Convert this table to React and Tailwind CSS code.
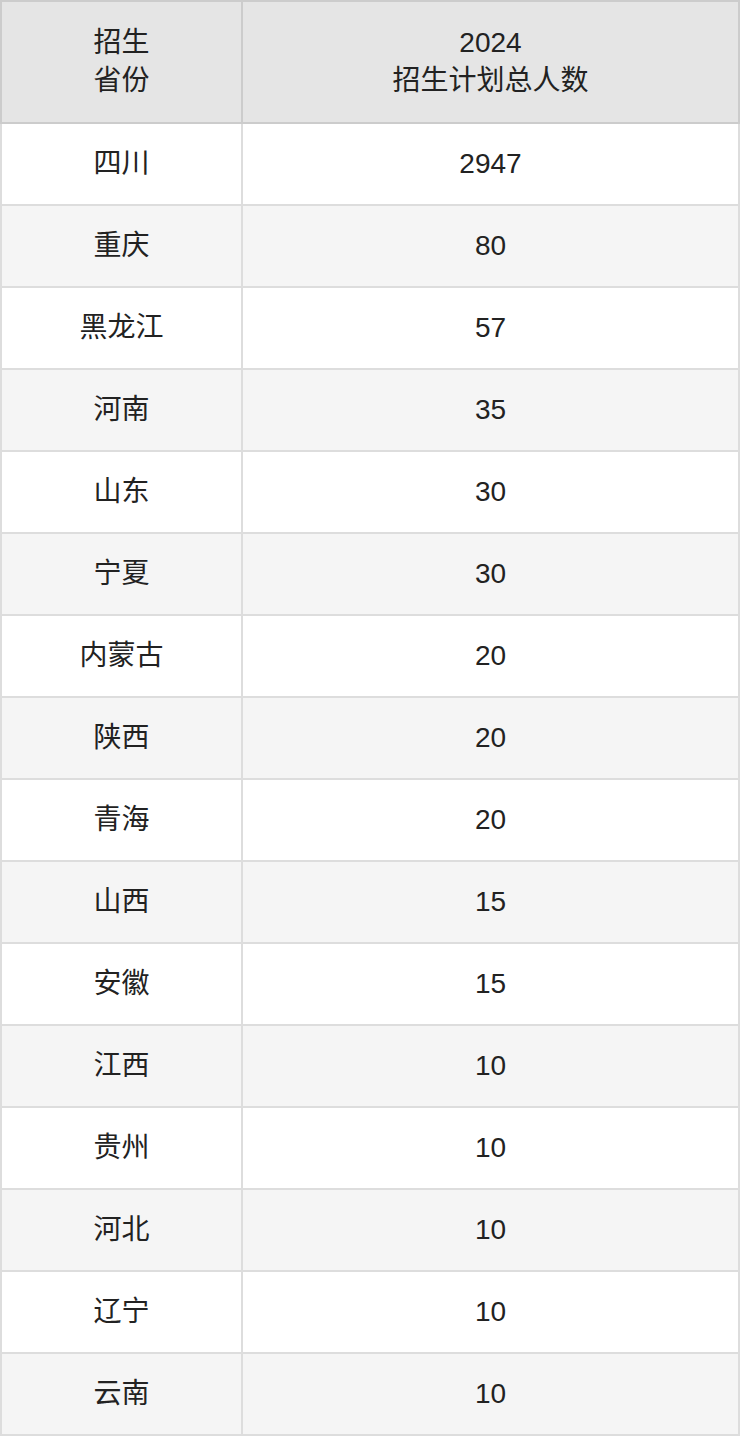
import React from "react";

const rows = [
  ["四川", "2947"],
  ["重庆", "80"],
  ["黑龙江", "57"],
  ["河南", "35"],
  ["山东", "30"],
  ["宁夏", "30"],
  ["内蒙古", "20"],
  ["陕西", "20"],
  ["青海", "20"],
  ["山西", "15"],
  ["安徽", "15"],
  ["江西", "10"],
  ["贵州", "10"],
  ["河北", "10"],
  ["辽宁", "10"],
  ["云南", "10"],
];

const App = () => {
  return (
    <div
      className="w-[740px] text-[#222] text-[28px]"
      style={{ fontFamily: '"Liberation Sans", "Noto Sans CJK SC", sans-serif' }}
    >
      {/* header */}
      <div className="grid grid-cols-[239px_495px] gap-x-[2px] bg-[#cccccc] p-[2px]">
        <div className="h-[120px] bg-[#e5e5e5] flex items-center justify-center text-center leading-[38px]">
          招生
          <br />
          省份
        </div>
        <div className="h-[120px] bg-[#e5e5e5] flex items-center justify-center text-center leading-[38px]">
          2024
          <br />
          招生计划总人数
        </div>
      </div>
      {/* body */}
      <div className="grid grid-cols-[239px_495px] gap-[2px] bg-[#dddddd] px-[2px] pb-[2px]">
        {rows.map(([prov, num], i) => (
          <React.Fragment key={prov + i}>
            <div
              className={`h-[80px] flex items-center justify-center ${
                i % 2 === 0 ? "bg-white" : "bg-[#f5f5f5]"
              }`}
            >
              {prov}
            </div>
            <div
              className={`h-[80px] flex items-center justify-center ${
                i % 2 === 0 ? "bg-white" : "bg-[#f5f5f5]"
              }`}
            >
              {num}
            </div>
          </React.Fragment>
        ))}
      </div>
    </div>
  );
};

export default App;
